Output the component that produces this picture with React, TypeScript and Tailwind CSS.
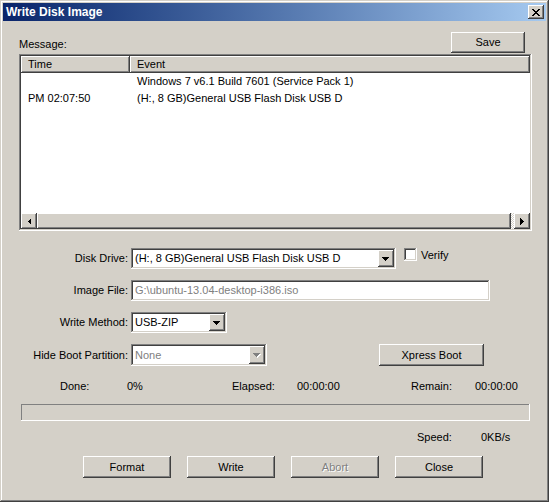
import React from 'react';

const raised =
  'shadow-[inset_-1px_-1px_#404040,inset_1px_1px_#ffffff,inset_-2px_-2px_#808080,inset_2px_2px_#d4d0c8]';
const sunken =
  'shadow-[inset_-1px_-1px_#ffffff,inset_1px_1px_#808080,inset_-2px_-2px_#d4d0c8,inset_2px_2px_#404040]';

function DownArrow({ disabled }: { disabled?: boolean }) {
  return (
    <svg width="8" height="5" viewBox="0 0 8 5" shapeRendering="crispEdges">
      {disabled && <polygon points="1,1 8,1 4.5,5" fill="#ffffff" />}
      <polygon points="0,0 7,0 3.5,4" fill={disabled ? '#808080' : '#000000'} />
    </svg>
  );
}

function Combo({
  className,
  text,
  disabled
}: {
  className: string;
  text: string;
  disabled?: boolean;
}) {
  return (
    <div className={`${sunken} bg-white flex items-stretch p-[2px] ${className}`}>
      <div className={`flex-1 flex items-center pl-[2px] ${disabled ? 'text-[#808080]' : 'text-black'}`}>
        {text}
      </div>
      <div className={`${raised} w-[16px] bg-[#d4d0c8] flex items-center justify-center pt-[1px]`}>
        <DownArrow disabled={disabled} />
      </div>
    </div>
  );
}

function Btn({
  className,
  children,
  disabled
}: {
  className: string;
  children: React.ReactNode;
  disabled?: boolean;
}) {
  return (
    <div
      className={`${raised} bg-[#d4d0c8] flex items-center justify-center ${
        disabled ? 'text-[#808080] [text-shadow:1px_1px_#ffffff]' : 'text-black'
      } ${className}`}
    >
      {children}
    </div>
  );
}

export default function App() {
  return (
    <div className="w-[549px] h-[502px] bg-[#d4d0c8] p-[3px] shadow-[inset_-1px_-1px_#404040,inset_1px_1px_#d4d0c8,inset_-2px_-2px_#808080,inset_2px_2px_#ffffff] font-['Liberation_Sans',Arial,sans-serif] text-[11px] leading-[13px] text-black select-none">
      {/* Title bar */}
      <div className="h-[18px] bg-gradient-to-r from-[#0a246a] to-[#a6caf0] flex items-center justify-between pl-[2px] pr-[2px]">
        <span className="text-white font-bold text-[12px] leading-[14px] pl-[1px]">Write Disk Image</span>
        <div className={`${raised} w-[16px] h-[14px] bg-[#d4d0c8] flex items-center justify-center`}>
          <svg width="8" height="7" viewBox="0 0 8 7" shapeRendering="crispEdges">
            <path d="M0 0h2v1h-2zM6 0h2v1h-2zM1 1h2v1h-2zM5 1h2v1h-2zM2 2h4v1h-4zM3 3h2v1h-2zM2 4h4v1h-4zM1 5h2v1h-2zM5 5h2v1h-2zM0 6h2v1h-2zM6 6h2v1h-2z" fill="#000" />
          </svg>
        </div>
      </div>

      <div className="pl-[16px] flex flex-col">
        {/* Message row */}
        <div className="mt-[11px] w-[512px] flex items-end justify-between">
          <span className="mb-[2px]">Message:</span>
          <Btn className="w-[74px] h-[21px] mr-[6px]">Save</Btn>
        </div>

        {/* List */}
        <div className={`${sunken} mt-[1px] w-[513px] h-[177px] bg-white p-[2px] flex flex-col`}>
          <div className="flex h-[17px]">
            <div className={`${raised} bg-[#d4d0c8] w-[109px] flex items-center pl-[7px]`}>Time</div>
            <div className={`${raised} bg-[#d4d0c8] flex-1 flex items-center pl-[7px]`}>Event</div>
          </div>
          <div className="flex-1 flex flex-col">
            <div className="flex h-[17px] items-center">
              <div className="w-[109px] pl-[7px]"></div>
              <div className="pl-[7px]">Windows 7 v6.1 Build 7601 (Service Pack 1)</div>
            </div>
            <div className="flex h-[17px] items-center">
              <div className="w-[109px] pl-[7px]">PM 02:07:50</div>
              <div className="pl-[7px]">(H:, 8 GB)General USB Flash Disk USB D</div>
            </div>
          </div>
          {/* Horizontal scrollbar */}
          <div className="flex h-[16px] bg-[#d4d0c8]">
            <div className={`${raised} w-[16px] flex items-center justify-center`}>
              <svg width="4" height="7" viewBox="0 0 4 7" shapeRendering="crispEdges">
                <polygon points="4,0 4,7 0.5,3.5" fill="#000" />
              </svg>
            </div>
            <div className={`${raised} flex-1`}></div>
            <div className="w-[3px] bg-[repeating-conic-gradient(#ffffff_0%_25%,#d4d0c8_0%_50%)] bg-[length:2px_2px]"></div>
            <div className={`${raised} w-[16px] flex items-center justify-center`}>
              <svg width="4" height="7" viewBox="0 0 4 7" shapeRendering="crispEdges">
                <polygon points="0,0 0,7 3.5,3.5" fill="#000" />
              </svg>
            </div>
          </div>
        </div>

        {/* Disk Drive */}
        <div className="mt-[17px] flex items-start h-[21px]">
          <div className="w-[109px] h-[21px] flex items-center justify-end">Disk Drive:</div>
          <Combo className="ml-[3px] w-[265px] h-[21px]" text="(H:, 8 GB)General USB Flash Disk USB D" />
          <div className={`${sunken} ml-[8px] w-[13px] h-[13px] bg-white`}></div>
          <span className="ml-[4px] mt-[1px]">Verify</span>
        </div>

        {/* Image File */}
        <div className="mt-[11px] flex items-center h-[21px]">
          <div className="w-[109px] flex justify-end">Image File:</div>
          <div className={`${sunken} ml-[3px] w-[359px] h-[21px] bg-white flex items-center pl-[4px] text-[#808080]`}>
            G:\ubuntu-13.04-desktop-i386.iso
          </div>
        </div>

        {/* Write Method */}
        <div className="mt-[11px] flex items-center h-[21px]">
          <div className="w-[109px] flex justify-end">Write Method:</div>
          <Combo className="ml-[3px] w-[96px] h-[21px]" text="USB-ZIP" />
        </div>

        {/* Hide Boot Partition */}
        <div className="mt-[11px] flex items-center h-[22px]">
          <div className="w-[109px] flex justify-end">Hide Boot Partition:</div>
          <Combo className="ml-[3px] w-[136px] h-[22px]" text="None" disabled />
          <Btn className="ml-[112px] w-[105px] h-[22px]">Xpress Boot</Btn>
        </div>

        {/* Status */}
        <div className="mt-[14px] flex h-[13px] items-center">
          <span className="ml-[41px] w-[67px]">Done:</span>
          <span className="w-[105px]">0%</span>
          <span className="w-[65px]">Elapsed:</span>
          <span className="w-[114px]">00:00:00</span>
          <span className="w-[64px]">Remain:</span>
          <span>00:00:00</span>
        </div>

        {/* Progress */}
        <div className="mt-[11px] ml-[2px] w-[509px] h-[17px] shadow-[inset_-1px_-1px_#ffffff,inset_1px_1px_#808080]"></div>

        <div className="mt-[10px] flex h-[13px] items-center">
          <span className="ml-[398px] w-[64px]">Speed:</span>
          <span>0KB/s</span>
        </div>

        {/* Buttons */}
        <div className="mt-[12px] ml-[64px] flex gap-[16px]">
          <Btn className="w-[88px] h-[22px]">Format</Btn>
          <Btn className="w-[88px] h-[22px]">Write</Btn>
          <Btn className="w-[88px] h-[22px]" disabled>Abort</Btn>
          <Btn className="w-[88px] h-[22px]">Close</Btn>
        </div>
      </div>
    </div>
  );
}
